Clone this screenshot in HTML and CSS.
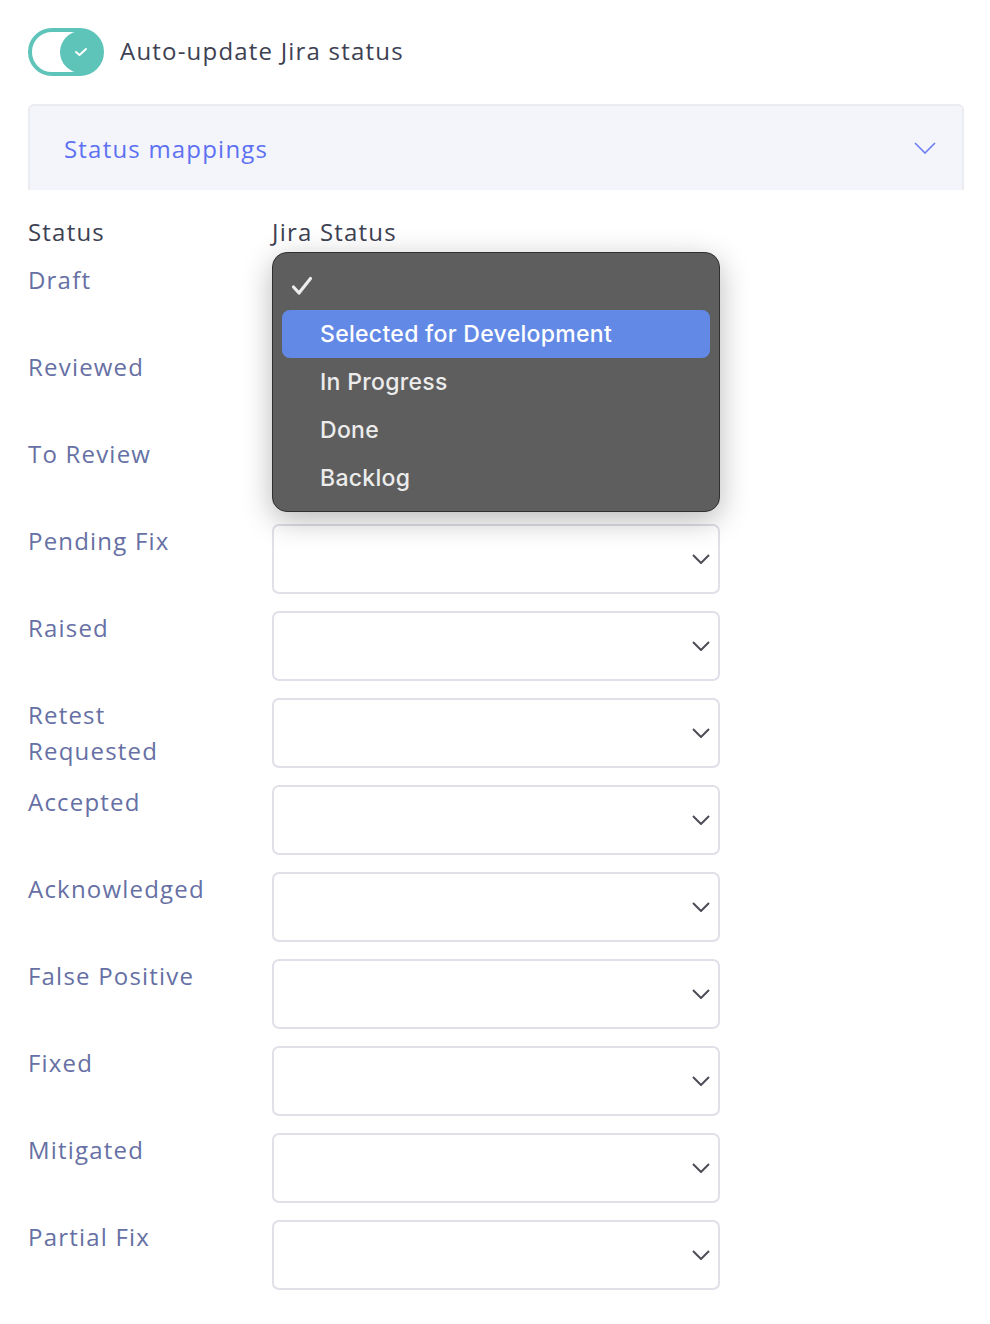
FILE: index.html
```html
<!DOCTYPE html>
<html lang="en">
<head>
    <meta charset="UTF-8">
    <meta name="viewport" content="width=device-width, initial-scale=1.0">
    <title>Jira Integration</title>
    <link rel="stylesheet" href="styles.css">
</head>
<body>
    <div class="toggle-row">
        <span class="toggle">
            <span class="knob">
                <svg width="14" height="10" viewBox="0 0 14 10"><path d="M2 5l3.5 3L12 2" fill="none" stroke="#fff" stroke-width="2" stroke-linecap="round" stroke-linejoin="round"/></svg>
            </span>
        </span>
        <span class="toggle-label">Auto-update Jira status</span>
    </div>

    <div class="panel">
        <span class="panel-title">Status mappings</span>
        <svg width="22" height="12" viewBox="0 0 22 12"><path d="M1 1l10 10L21 1" fill="none" stroke="#6b7df3" stroke-width="1.6"/></svg>
    </div>

    <div class="mapping">
        <div class="mapping-head">
            <span>Status</span>
            <span>Jira Status</span>
        </div>
        <div id="mapping-rows"></div>

        <!-- open native menu for the Draft row -->
        <div class="menu">
            <div class="menu-check">
                <svg width="22" height="20" viewBox="0 0 22 20"><path d="M2.5 11l5.5 6L19.5 2.5" fill="none" stroke="#ededed" stroke-width="3.2" stroke-linecap="round" stroke-linejoin="round"/></svg>
            </div>
            <div class="menu-item active">Selected for Development</div>
            <div class="menu-item">In Progress</div>
            <div class="menu-item">Done</div>
            <div class="menu-item">Backlog</div>
        </div>
    </div>

    <script>
        const statuses = [
            "Draft", "Reviewed", "To Review", "Pending Fix", "Raised",
            "Retest Requested", "Accepted", "Acknowledged", "False Positive",
            "Fixed", "Mitigated", "Partial Fix"
        ];

        const rows = document.getElementById("mapping-rows");
        statuses.forEach((status) => {
            const row = document.createElement("div");
            row.className = "mapping-row";
            row.innerHTML = `
                <span class="status-name">${status}</span>
                <div class="select-box">
                    <svg width="18" height="10" viewBox="0 0 18 10"><path d="M1 1l8 8 8-8" fill="none" stroke="#4b4c55" stroke-width="2"/></svg>
                </div>
            `;
            rows.appendChild(row);
        });
    </script>
</body>
</html>
```

FILE: styles.css
```css
body {
    font-family: 'Open Sans', sans-serif;
    letter-spacing: 1.2px;
    margin: 0;
    padding: 28px 26px 28px 28px;
    background-color: #ffffff;
    color: #3d4152;
}

.toggle-row {
    display: flex;
    align-items: center;
    gap: 16px;
    height: 48px;
}

.toggle {
    box-sizing: border-box;
    width: 76px;
    height: 48px;
    border: 4px solid #5ec4b9;
    border-radius: 24px;
    display: flex;
    justify-content: flex-end;
    align-items: center;
    background: #ffffff;
}

.knob {
    width: 42px;
    height: 42px;
    margin-right: -2px;
    border-radius: 50%;
    background: #5ec4b9;
    display: flex;
    align-items: center;
    justify-content: center;
}

.toggle-label {
    font-size: 24px;
    line-height: 32px;
    margin-top: -3px;
    color: #3d4152;
}

.panel {
    margin-top: 28px;
    height: 86px;
    box-sizing: border-box;
    background: #f4f5fa;
    border: 2px solid #ebecf2;
    border-bottom: none;
    border-radius: 6px 6px 0 0;
    padding: 0 26px 0 34px;
    display: flex;
    justify-content: space-between;
    align-items: center;
}

.panel-title {
    font-size: 24px;
    color: #5e71f3;
}

.mapping {
    position: relative;
    margin-top: 24px;
}

.mapping-head,
.mapping-row {
    display: grid;
    grid-template-columns: 244px 448px;
}

.mapping-head {
    font-size: 24px;
    line-height: 36px;
    color: #3d4152;
    margin-bottom: 13px;
}

.mapping-row {
    height: 70px;
    margin-bottom: 17px;
}

.status-name {
    font-size: 24px;
    line-height: 36px;
    margin-top: -1px;
    color: #6670a4;
    padding-right: 50px;
}

.select-box {
    box-sizing: border-box;
    height: 70px;
    border: 2px solid #dfe0e8;
    border-radius: 7px;
    background: #ffffff;
    display: flex;
    justify-content: flex-end;
    align-items: center;
    padding-right: 8px;
}

.menu {
    position: absolute;
    left: 244px;
    top: 38px;
    width: 448px;
    height: 260px;
    box-sizing: border-box;
    background: #5e5e5e;
    border: 1.5px solid #303030;
    border-radius: 15px;
    box-shadow: 0 8px 30px rgba(0, 0, 0, 0.28);
    padding: 0 9px;
    font-family: 'Inter', sans-serif;
    letter-spacing: 0.3px;
}

.menu-check {
    height: 57px;
    padding-left: 9px;
    display: flex;
    align-items: center;
    padding-top: 8px;
    box-sizing: border-box;
}

.menu-item {
    height: 48px;
    line-height: 48px;
    padding-left: 38px;
    border-radius: 8px;
    font-size: 23px;
    font-weight: 500;
    color: #ececec;
}

.menu-item.active {
    background: #6389e6;
    color: #ffffff;
}
```
